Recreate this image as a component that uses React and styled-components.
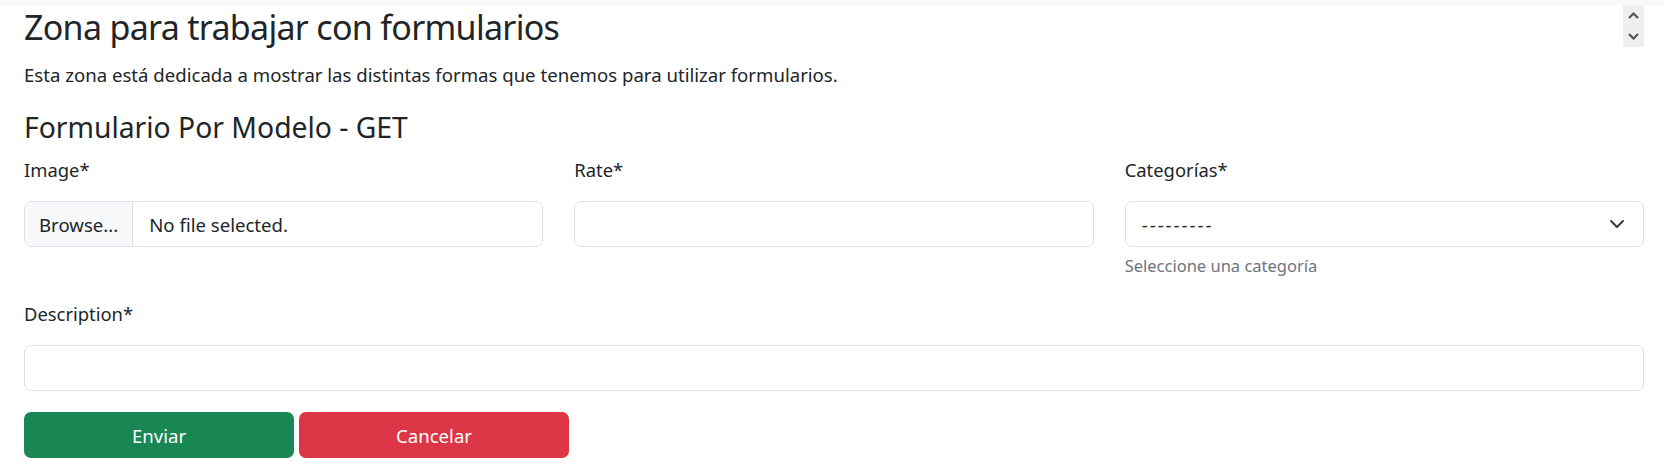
import React from 'react';
import styled, { createGlobalStyle } from 'styled-components';

const GlobalStyle = createGlobalStyle`
  body {
    margin: 0;
    background: #fff;
    color: #212529;
    font-family: "Noto Sans", "Liberation Sans", sans-serif;
  }
  * { box-sizing: border-box; }
`;

const TopBar = styled.div`
  height: 5px;
  background: #f8f9fa;
`;

const Page = styled.main`
  position: relative;
  padding: 0 20px 0 24px;
`;

const ScrollArrows = styled.div`
  position: absolute;
  top: 0;
  right: 20px;
  width: 21px;
  height: 42px;
  background: #efefef;
  display: flex;
  flex-direction: column;
  align-items: center;
  justify-content: space-around;
  color: #555;
`;

const Title = styled.h2`
  margin: 0 0 12px;
  font-size: 34px;
  letter-spacing: -0.7px;
  line-height: 44px;
  font-weight: 400;
`;

const Lead = styled.p`
  margin: 0 0 20px;
  font-size: 18.6px;
  line-height: 28.8px;
`;

const Subtitle = styled.h4`
  margin: 0 0 11px;
  font-size: 28.3px;
  line-height: 34.8px;
  font-weight: 400;
`;

const Row = styled.div`
  display: grid;
  grid-template-columns: repeat(${({ $cols }) => $cols}, 1fr);
  column-gap: 31px;
  margin-bottom: ${({ $mb }) => $mb}px;
`;

const Field = styled.div`
  display: flex;
  flex-direction: column;
`;

const Label = styled.label`
  font-size: 18.4px;
  line-height: 28.8px;
  margin-bottom: 17px;
`;

const Control = styled.div`
  position: relative;
  display: flex;
  align-items: center;
  height: 46px;
  border: 1px solid #dee2e6;
  border-radius: 7px;
  background: #fff;
  font-size: 18.6px;
  overflow: hidden;
`;

const Browse = styled.span`
  display: flex;
  align-items: center;
  height: 100%;
  padding: 0 14px;
  background: #f8f9fa;
  border-right: 1px solid #dee2e6;
`;

const FileName = styled.span`
  padding-left: 16px;
`;

const SelectValue = styled.span`
  padding-left: 16px;
  flex: 1;
  letter-spacing: 2px;
`;

const Chevron = styled.svg`
  position: absolute;
  right: 18px;
  top: 50%;
  transform: translateY(-50%);
`;

const Help = styled.div`
  margin-top: 6px;
  font-size: 16.5px;
  line-height: 25.2px;
  color: #6c757d;
`;

const Actions = styled.div`
  display: flex;
  gap: 5px;
  margin-top: 21px;
`;

const Button = styled.button`
  width: 270px;
  height: 46px;
  border: none;
  border-radius: 7px;
  color: #fff;
  font-family: inherit;
  font-size: 18.6px;
  background: ${({ $variant }) => ($variant === 'danger' ? '#dc3545' : '#198754')};
`;

const Arrow = ({ up }) => (
  <svg width="11" height="7" viewBox="0 0 11 7">
    <path
      d={up ? 'M1 6 5.5 1.5 10 6' : 'M1 1 5.5 5.5 10 1'}
      fill="none"
      stroke="currentColor"
      strokeWidth="2.2"
    />
  </svg>
);

export default function App() {
  return (
    <>
      <GlobalStyle />
      <TopBar />
      <Page>
        <ScrollArrows>
          <Arrow up />
          <Arrow />
        </ScrollArrows>
        <Title>Zona para trabajar con formularios</Title>
        <Lead>Esta zona está dedicada a mostrar las distintas formas que tenemos para utilizar formularios.</Lead>
        <Subtitle>Formulario Por Modelo - GET</Subtitle>
        <form>
          <Row $cols={3} $mb={21}>
            <Field>
              <Label>Image*</Label>
              <Control>
                <Browse>Browse...</Browse>
                <FileName>No file selected.</FileName>
              </Control>
            </Field>
            <Field>
              <Label>Rate*</Label>
              <Control />
            </Field>
            <Field>
              <Label>Categorías*</Label>
              <Control>
                <SelectValue>---------</SelectValue>
                <Chevron width="16" height="16" viewBox="0 0 16 16">
                  <path d="M2 5l6 6 6-6" fill="none" stroke="#343a40" strokeWidth="2" strokeLinecap="round" strokeLinejoin="round" />
                </Chevron>
              </Control>
              <Help>Seleccione una categoría</Help>
            </Field>
          </Row>
          <Row $cols={1} $mb={0}>
            <Field>
              <Label>Description*</Label>
              <Control />
            </Field>
          </Row>
          <Actions>
            <Button type="button">Enviar</Button>
            <Button type="button" $variant="danger">Cancelar</Button>
          </Actions>
        </form>
      </Page>
    </>
  );
}
